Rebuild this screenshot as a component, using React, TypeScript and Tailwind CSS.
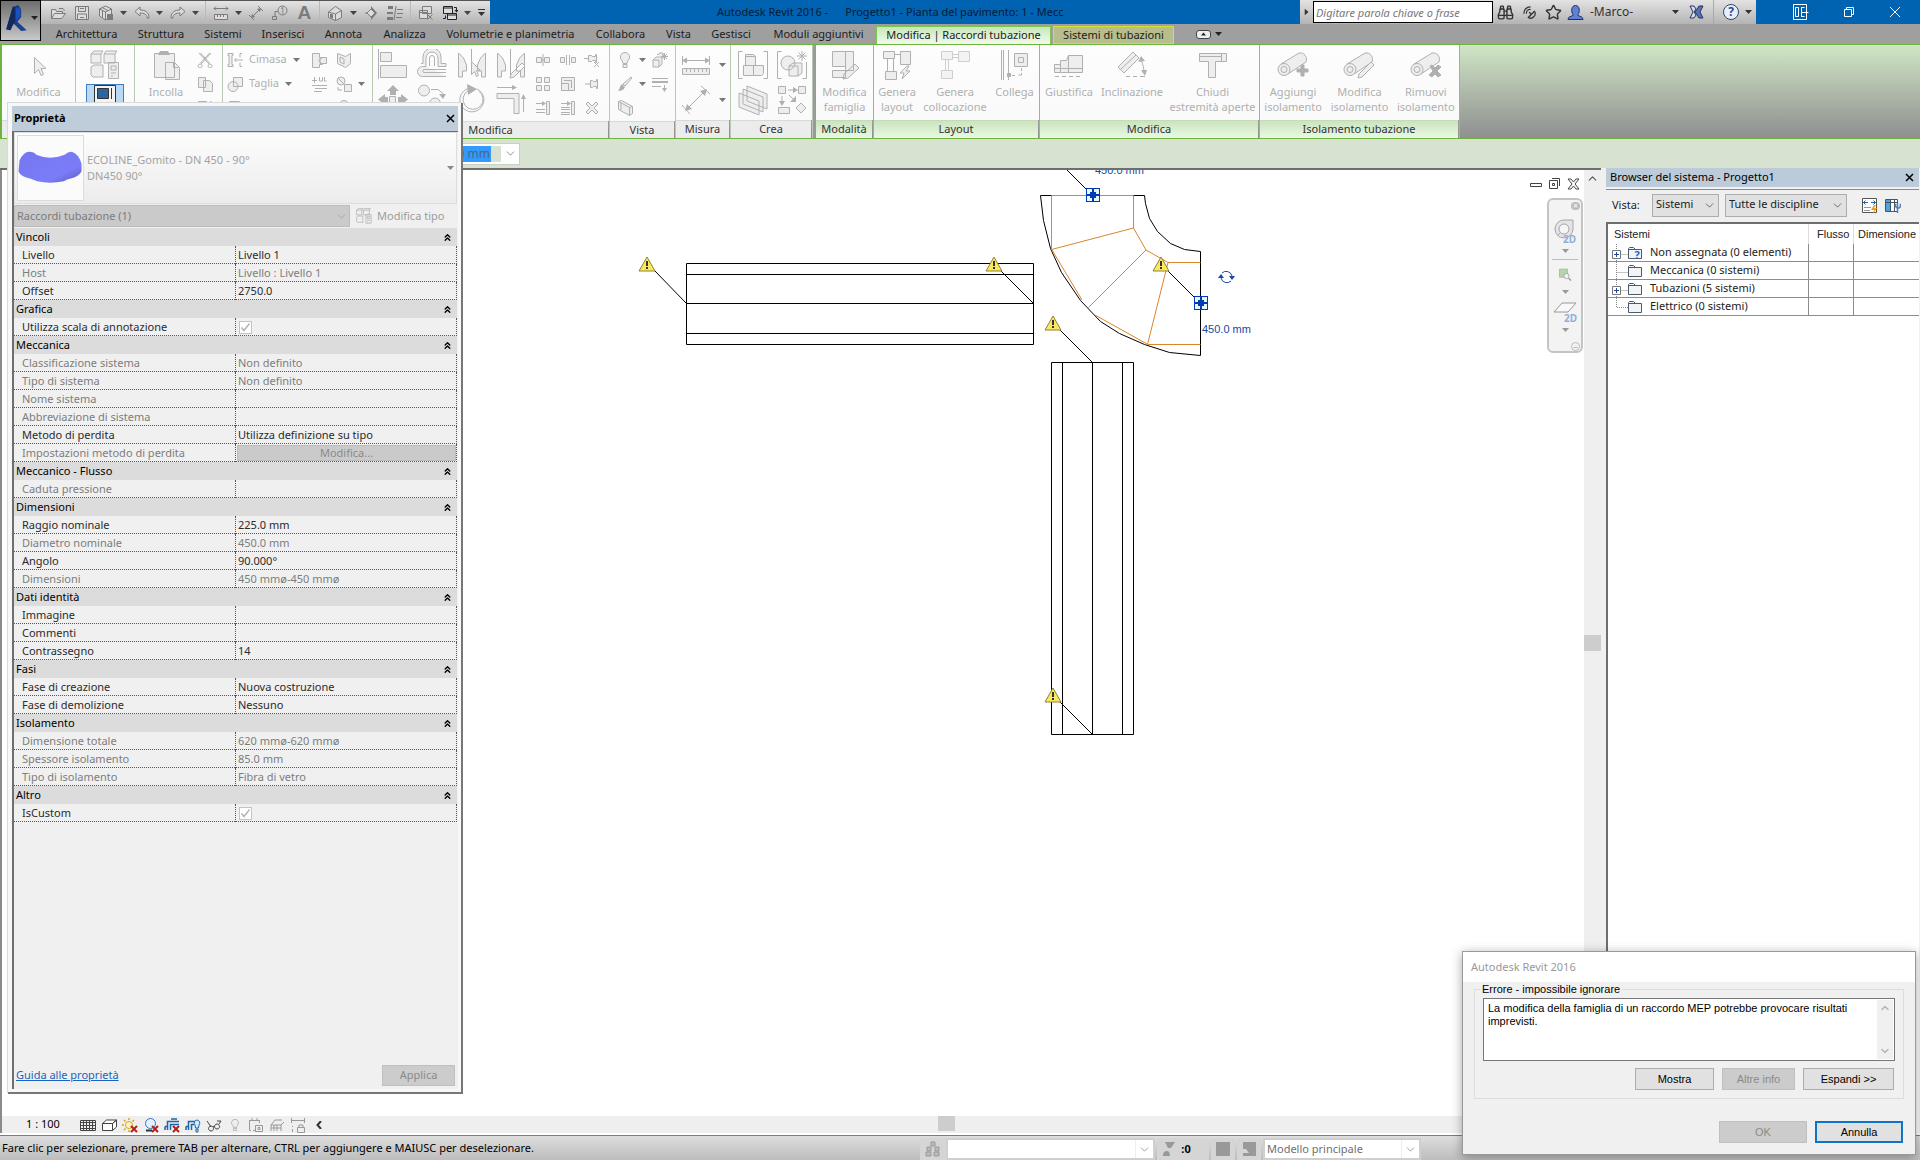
import type { ReactNode } from "react";
import { clsx } from "clsx";
import { Binoculars, ChevronDown, ChevronsUp, ChevronUp, SatelliteDish, Star } from "lucide-react";

type Glyph = {
  size: number;
  box?: string; // outlined with a light fill
  line?: string; // outline only
  solid?: string; // filled
};

const glyphs: Record<string, Glyph> = {
  // quick access
  open: { size: 16, box: "M1.5 13.5V4.5h4l1 2h6v2M1.5 13.5l3-5h11l-4 5z", line: "M9 3.5h4l1.5 2" },
  save: { size: 16, box: "M1.5 1.5h13v13h-13z", line: "M4.5 1.5v5h7v-5M6 3.5h4M3.5 14v-5h9v5M6 12.5h4" },
  sync: { size: 16, box: "M1.5 4l6-3 6 3v7l-6 4-6-4z", line: "M1.5 4l6 3 6-3M7.5 7v8M4 2.5l6 3M4.5 5.5v7", solid: "M9 9h6v6H9z" },
  undo: { size: 16, box: "M1 6.5L6 2v3c5 0 9 2 9 8h-2c0-4-3-5-7-5v3z" },
  redo: { size: 16, box: "M15 6.5L10 2v3c-5 0-9 2-9 8h2c0-4 3-5 7-5v3z" },
  measureSm: { size: 16, box: "M1.5 9.5h13v5h-13z", line: "M1 3.5h14M3 1.5l-2 2 2 2M13 1.5l2 2-2 2M4.5 10v2M7.5 10v2M10.5 10v2" },
  dimSm: { size: 16, line: "M4 12l8-8M1 10l5 5M10 1l5 5", solid: "M3 13l1-4 3 3zM13 3l-1 4-3-3z" },
  house: { size: 16, box: "M1.5 7l7-5.5 6 4v7l-6 3-7-3z", line: "M1.5 7l7 2 6-3.5M8.5 9v6.5", solid: "M3 8.5l3 1v4l-3-1z" },
  section: { size: 16, box: "M4 8l4-4 4 4-4 4z", solid: "M8 1l6 7h-2L8 4zM8 15l6-7h-2l-4 4z", line: "M2 8h2" },
  thin: { size: 16, line: "M10 4.5h6M10 8.5h6M9 12.5h6M9 1l-2 14", solid: "M1 1h5v3H1zM0 7h6v2H0zM0 12h6v3H0z" },
  closeHidden: { size: 16, box: "M4.5 1.5h9v7h-9zM1.5 5.5h8v8h-8z", line: "M1.5 7.5h8M9.5 9.5l5 5M14.5 9.5l-5 5" },
  switchWin: { size: 16, box: "M1.5 1.5h9v7h-9zM5.5 8.5h9v6h-9z", line: "M1.5 3h9M5.5 10h9M12 2.5h2.5v3M3.5 10.5v3H1", solid: "M12.5 5h4l-2 2.5z" },
  // ribbon, large
  cursor: { size: 30, box: "M10.5 7.5v16l4-4 2.5 6 2.5-1-2.5-6h5z" },
  typeProps: { size: 30, box: "M4 1h9l-2 3v9H1V4zM16 1h11l-2 3v9H14V4zM4 15h9v12H3l-2-2v-8zM18.5 12.5h10v16h-10z", line: "M1 4h10M14 4h11M21 16h5v4h-5zM21 23h5M21 26h2" },
  paste: { size: 30, box: "M3.5 3.5h20v24h-20zM14.5 12.5h9l5 5v12h-14z", line: "M22.5 12.5v5h5", solid: "M9 1h8l2 4H7z" },
  align: { size: 30, box: "M2.5 3.5h11v9h-11zM2.5 16.5h26v12h-26z", line: "M.5 0v30" },
  offset: { size: 30, box: "M29 27.5H5.5a5 5 0 0 1 0-10H9V9a6 6 0 0 1 12 0v8.5h8v-3h-5V8a9 9 0 0 0-18 0v6.5H4", line: "M29 23.5H6.5a2 2 0 0 1 0-3H29M12.5 17V9a2.5 2.5 0 0 1 5 0v8" },
  mirror: { size: 30, box: "M1.5 4l5 5 3 7v6h-4v6h-4zM28.5 4l-5 5-3 7v6h4v6h4zM14.5 12.5v13l3-3 2 5 2-1-2-5h4z", line: "M14.5 0v12" },
  mirrorDraw: { size: 30, box: "M1.5 4l5 5 3 7v6h-4v6h-4zM28.5 4l-5 5-3 7v6h4v6h4zM14 29l1-4L26 14l3 3-11 11z", line: "M14.5 0v26" },
  move: { size: 30, box: "M11.5 12.5h6v6h-6z", solid: "M15 1l6 6h-3v4h-6V7H9zM0 15.5L7 10v3h3v5H7v3zM30 15.5L23 10v3h-3v5h3v3zM15 30l6-6h-3v-4h-6v4H9z" },
  copyMove: { size: 30, box: "M7 1a5 5 0 1 1 0 11 5 5 0 1 1 0-11zM18 14a5 5 0 1 1 0 11 5 5 0 1 1 0-11z", line: "M14 5.5h7l5 4v3", solid: "M22 10h7l-3 5z" },
  rotate: { size: 30, line: "M20 5a12 12 0 1 1-9-.5M21.5 7a10 10 0 1 1-10-.5", solid: "M10 0l10 5-9 6z" },
  trim: { size: 30, box: "M1 9.5h22v20h-5v-15H1z", line: "M1 3.5h16M27.5 28V14", solid: "M16 1l5 2.5L16 6zM25 15l2.500-5 2.500 5z" },
  measure: { size: 30, box: "M1.5 18.5h27v6h-27z", line: "M2 10.5h26M1.5 6v9M28.5 6v9M5.5 19v3M9.5 19v3M13.5 19v3M17.5 19v3M21.5 19v3M25.5 19v3", solid: "M1 10.5l5-3v6zM29 10.5l-5-3v6z" },
  dim: { size: 30, line: "M5 25L25 5M1 20l8 9M20 1l9 8", solid: "M4 26l2-7 5 5zM26 4l-2 7-5-5z" },
  group: { size: 30, box: "M7.5 4.5h8l2 2v9h-10zM5.5 15.5h10v10h-10zM15.5 15.5h10v8l-2 2h-8z", line: "M4.5 1.5h-4v27h4M25.500 1.5h4v27h-4M7.5 6.5h10" },
  similar: { size: 30, box: "M11 6a7 7 0 1 1 0 14 7 7 0 1 1 0-14zM12 16l4-3h9v10l-4 3h-9z", line: "M4.5 1.5h-4v27h4M25.5 28.5h4V12M12 16h9v10M25 1v10M20 6h10M21.5 2.5l7 7M28.5 2.5l-7 7" },
  assembly: { size: 30, box: "M9 1l20 8v15l-20-8zM5 4l20 8v15L5 19zM1 8l20 8v14L1 22z" },
  parts: { size: 30, box: "M1.5 1.5h7v7h-7zM21.5 1.5h7v7h-7zM1.5 22.5h11v6h-11zM24 18l5 5-5 5-5-5z", line: "M11 5h6M5 11v6M12 10l5 5", solid: "M16 2l5 3-5 3zM2 16h6l-3 5zM19 17v-6l-6 6z" },
  editFamily: { size: 30, box: "M2.5 1.5h13v15h-13zM15.5 1.5h8v19h-8zM2.5 20.5h13v7h-13zM13 29l1-5 11-10 4 4-11 10z" },
  layout: { size: 30, box: "M1.5 1.5h11v7h-11zM18.5 1.5h10v13h-10zM3.5 21.5h11v8h-11zM25 16l-7 7h4l-2 6 8-8h-4l3-5z", line: "M13 4.5h5M5.5 9v12M11.5 9v12" },
  placing: { size: 30, box: "M1.5 1.5h11v8h-11zM18.5 1.5h11v10h-11zM1.5 20.5h11v8h-11z", line: "M13 4.5h5M13 7.5h5M5.5 10v10M8.5 10v10" },
  connect: { size: 30, box: "M14.5 3.5h13v13h-13zM18.5 7.5h5v5h-5z", line: "M1.5 0v30M3.5 0v30M8.5 0v30M21.5 18v3M21.5 23v2h-3M15 25.5h-3", solid: "M7 23h4v4H7z" },
  justify: { size: 30, box: "M.5 14.5h6v8h-6zM6.5 10.5h6l2-5h14v17h-22z", line: "M1 26.5h4M8 26.5h4M15 26.5h4M22 26.5h4M14.5 5v18M1 18.5h28" },
  slope: { size: 30, box: "M1 17L16 2l6 6L7 23z", line: "M4 19L19 5M9 26.5h4M16 26.5h4M23 26.5h5M24 10c2 4 3 9 3 13", solid: "M21 12l3-6 4 5zM24 20h6l-2 6z" },
  cap: { size: 30, box: "M1.5 3.5h22v8h-6v16h-7v-16h-9zM23.5 3.5h5v8h-5z", line: "M2 6.5h21" },
  // ribbon, small
  cut: { size: 16, line: "M2 1l10 11M14 1L4 12M3.5 1l9 10M12.5 1l-9 10M3 12a2 2 0 1 0 .1 0M13 12a2 2 0 1 0 .1 0" },
  copy: { size: 16, box: "M1.5 1.5h7v10h-7zM6.5 4.5h6l3 3v8h-9z" },
  match: { size: 16, box: "M1.5 1.5h8v12h-8zM14 1l-6 8 2 1z" },
  cope: { size: 16, box: "M1 1.5h5v2H5v9h1v2H1v-2h1v-9H1z", line: "M8 8h8M9.5 6l-2 2 2 2M15 1.5h-2v4M15 14.5h-2v-4" },
  cutGeo: { size: 16, box: "M6.5 1.5h9v9h-9zM6 5.5a5 5 0 1 1 0 10 5 5 0 1 1 0-10z" },
  join: { size: 16, box: "M2.5 1.5h10v9h-10z" },
  face: { size: 16, box: "M1.5 1.5h7v4h3l-4 3 4 4h-3v3h-7zM9 5.5h6.5v6H9z" },
  wall: { size: 16, box: "M1.5 1.5l8 3 5-3v10l-5 4-8-4zM4 5l4 2v5l-4-2z" },
  beam: { size: 16, line: "M3.5 1v6M1 4.5h5M8.5 1v4h3V1M13.5 1v4h2M1 9.5h15M4 12.5h12M3 15.5h8" },
  demolish: { size: 16, box: "M8.5 8.5h7v7h-7zM5 1a4 4 0 1 1 0 8 4 4 0 1 1 0-8z", line: "M2 2l6 6M2 11v3h4" },
  split: { size: 16, box: "M1.5 5.5h5v5h-5zM9.5 5.5h5v5h-5z", line: "M8 2v12M6 8h4" },
  splitGap: { size: 16, box: "M.5 5.5h4v5h-4zM11.5 5.5h4v5h-4z", line: "M6.5 3v10M9.5 3v10" },
  unpin: { size: 16, box: "M4.5 3.5h3l1 1h3v-2h1v8h-1v-2h-3l-1 1h-3z", line: "M0 6.5h4M10 10l5 5M15 10l-5 5" },
  array: { size: 16, box: "M1.5 1.5h5v5h-5zM9.5 1.5h5v5h-5zM1.5 9.5h5v5h-5zM9.5 9.5h5v5h-5z" },
  scale: { size: 16, box: "M1.5 1.5h13v13h-13zM1.5 7.5h7v7h-7z", line: "M4 4.5h7.5V12" },
  pin: { size: 16, box: "M6.5 4.5h2l1 1h3v-2h1v9h-1v-2h-3l-1 1h-2z", line: "M1 8h5" },
  trimOne: { size: 16, box: "M11.5 1.5h3v13h-3z", line: "M1 3.5h7M1 9.5h9M1 12.5h9", solid: "M7 1l4 2.5L7 6z" },
  trimMany: { size: 16, box: "M11.5 1.5h3v13h-3z", line: "M1 3.5h7M1 7.5h9M1 9.5h9M1 12.5h9M1 14.5h9", solid: "M7 1l4 2.5L7 6z" },
  remove: { size: 16, box: "M2 4l2-2 4 4 4-4 2 2-4 4 4 4-2 2-4-4-4 4-2-2 4-4z" },
  bulb: { size: 16, box: "M8 .5a4.5 4.5 0 0 1 3 8l-1 3H6l-1-3a4.5 4.5 0 0 1 3-8zM6 12.5h4v3H6z" },
  cubes: { size: 16, box: "M1 8l3-3h6v7l-3 3H1zM5 3l3-2h3v4", line: "M1 8h6v7M12.5 1v7M9 4.5h7M10 2l5 5M15 2l-5 5" },
  brush: { size: 16, box: "M14 1l1 1-7 8-2-2z", solid: "M5 8l3 3c-1 3-4 4-7 4 2-2 1-4 4-7z" },
  lines: { size: 16, line: "M0 2.5h16M0 5.5h16M0 6.500h16M0 10.5h9M12.5 9v4", solid: "M10 12h5l-2.5 4z" },
  box3d: { size: 16, box: "M1.5 1.5l3-1 11 6v7l-3 2-11-6z", line: "M1.5 1.5l11 6v8M4 3v7M12.5 7.5l3-1" },
  // view bar and status bar
  detail: { size: 16, box: "M.5 3.5h15v10H.5z", line: "M1 5.5h15M1 8.5h15M1 11.5h15M3.5 3v10M6.5 3v10M9.5 3v10M12.5 3v10" },
  style: { size: 16, box: "M1.5 6.5l4-3.5h10l-4 3.5zM1.5 6.5h10v7h-10zM11.5 6.5l4-3.5v7l-4 3.5z" },
  glasses: { size: 16, line: "M1 4l4 6M5 9a2.5 2.5 0 1 0 .1 0M11 7a2.5 2.5 0 1 0 .1 0M7 10l2-1M13 7l2-3h-4" },
  temp: { size: 16, line: "M1 3.5h10M3 13.5H1.5v-10M11.500 3v3M7.5 8.5h7v6h-7zM4 1v2M9 1v2M5 13.5h2M10 10.5h2v2h-2z" },
  analytic: { size: 16, line: "M2 14V8l4-5h7M2 8h10v6M5 8v6M8 8v6M2 11h10M12 8l3-3" },
  lockDim: { size: 16, line: "M1 3.5h14M1.5 1v5M14.5 1v5M2.5 9v1M2.5 12v3M7.5 10.5h7v5h-7zM9 10V8h4v2" },
  worksets: { size: 16, box: "M6 1h4v4H6zM2 6h4v4H2zM10 6h4v4h-4zM1 11h5v4H1zM9 11h5v4H9z" },
  editable: { size: 16, solid: "M4 1h10l-4 6H7zM2 15c0-4 2-5 4-5s3 2 3 5z" },
  design: { size: 16, solid: "M1 1h14v14H1z" },
  addSet: { size: 16, solid: "M2 1h13v14H2v-3h6l-3-4H2z" },
};

function Icon({ name, size, fill = "#eeeeee", className }: { name: string; size?: number; fill?: string; className?: string }) {
  const g = glyphs[name];
  const px = size ?? g.size;
  return (
    <svg width={px} height={px} viewBox={`0 0 ${g.size} ${g.size}`} fill="none" stroke="currentColor" className={clsx("shrink-0", className)} aria-hidden="true">
      {g.box && <path d={g.box} fill={fill} />}
      {g.line && <path d={g.line} />}
      {g.solid && <path d={g.solid} fill="currentColor" stroke="none" />}
    </svg>
  );
}

function Caret({ className }: { className?: string }) {
  return (
    <svg width="7" height="4" viewBox="0 0 7 4" className={clsx("shrink-0", className)} aria-hidden="true">
      <path d="M0 0h7L3.5 4z" fill="currentColor" />
    </svg>
  );
}

function CloseMark() {
  return (
    <svg width="9" height="9" viewBox="0 0 9 9" stroke="#000" strokeWidth="1.5" aria-hidden="true">
      <path d="M1 1l7 7M8 1L1 8" />
    </svg>
  );
}

/* ---------- title bar ---------- */

function Quick({ name, className }: { name: string; className?: string }) {
  return (
    <button aria-label={name} className={clsx("flex w-6 items-center justify-center", className)}>
      <Icon name={name} fill="#dcdcdc" />
    </button>
  );
}

const QuickCaret = () => (
  <button aria-label="menu" className="flex w-3 items-center justify-center text-[#444]">
    <Caret />
  </button>
);

const QuickSep = () => <span className="mx-[3px] h-full w-px bg-[#b9b9b9]" />;

function QuickAccess() {
  return (
    <div className="flex h-full w-[449px] shrink-0 border-t border-[#555] bg-linear-to-b from-[#e3e3e3] to-[#b4b4b4] pl-[5px] text-[#7b7b7b]">
      <Quick name="open" />
      <Quick name="save" />
      <Quick name="sync" />
      <QuickCaret />
      <Quick name="undo" />
      <QuickCaret />
      <Quick name="redo" />
      <QuickCaret />
      <QuickSep />
      <Quick name="measureSm" />
      <QuickCaret />
      <Quick name="dimSm" />
      <button aria-label="tag" className="flex w-6 items-center justify-center">
        <svg width="16" height="16" viewBox="0 0 16 16" fill="none" stroke="currentColor">
          <circle cx="10.5" cy="5.5" r="4.5" />
          <path d="M6 6.5H3V12M.5 11.5h4v3h-4z" />
          <text x="10.5" y="8.5" fontSize="8" textAnchor="middle" fill="currentColor" stroke="none" fontFamily="Noto Sans, sans-serif">1</text>
        </svg>
      </button>
      <button className="w-6 text-center font-['Liberation_Sans',sans-serif] text-[19px] leading-6 font-bold">A</button>
      <QuickSep />
      <Quick name="house" />
      <QuickCaret />
      <Quick name="section" />
      <Quick name="thin" />
      <QuickSep />
      <Quick name="closeHidden" />
      <Quick name="switchWin" className="text-[#222]" />
      <QuickCaret />
      <button aria-label="customize" className="flex w-4 flex-col items-center justify-center gap-0.5 text-[#333]">
        <span className="h-px w-[7px] bg-[#333]" />
        <Caret />
      </button>
    </div>
  );
}

function InfoCenter() {
  return (
    <div className="flex h-full w-[456px] shrink-0 items-center bg-linear-to-b from-[#e3e3e3] to-[#b4b4b4] text-[#333]">
      <button aria-label="expand" className="flex w-[13px] justify-center">
        <Caret className="-rotate-90" />
      </button>
      <input
        aria-label="Cerca"
        placeholder="Digitare parola chiave o frase"
        className="h-[22px] w-[180px] border border-black bg-white px-[2px] text-[11px] italic outline-none placeholder:text-[#777]"
      />
      <button aria-label="search" className="flex w-6 justify-center"><Binoculars size={17} strokeWidth={2} /></button>
      <button aria-label="subscription" className="flex w-6 justify-center"><SatelliteDish size={15} strokeWidth={2} className="-scale-x-100" /></button>
      <button aria-label="favorites" className="flex w-6 justify-center"><Star size={17} strokeWidth={2} /></button>
      <button className="flex items-center gap-[6px] pl-[2px]">
        <svg width="17" height="17" viewBox="0 0 17 17" fill="#5f82d8" stroke="#1d2f66">
          <path d="M1 15.5c0-3 3-3 5-4v-1C4 8 4 1.5 8.5 1.5S13 8 11 10.5v1c2 1 5 1 5 4z" />
        </svg>
        <span className="w-[76px] text-left text-[12px]">-Marco-</span>
        <Caret />
      </button>
      <button aria-label="exchange" className="ml-[10px] flex">
        <svg width="15" height="14" viewBox="0 0 15 14" fill="#5472b8" stroke="#28355e">
          <path d="M1 1h4l2 3-2 3 2 3-2 3H1l3-6z" fill="#d5dbee" />
          <path d="M14 1h-4L6 7l4 6h4l-3-6z" />
        </svg>
      </button>
      <span className="mx-[9px] h-full w-px bg-[#aaa]" />
      <button className="flex size-4 items-center justify-center rounded-full border border-[#34466f] bg-[#e9eefb] text-[12px] leading-none font-bold text-[#274a9c]">?</button>
      <Caret className="ml-[6px]" />
    </div>
  );
}

function TitleBar() {
  return (
    <div className="flex h-6 bg-[#0063b1]">
      <QuickAccess />
      <p className="min-w-0 flex-1 truncate pl-[227px] text-[11px] leading-6 whitespace-pre text-[#041c38]">
        {"Autodesk Revit 2016 -      Progetto1 - Pianta del pavimento: 1 - Mecc"}
      </p>
      <InfoCenter />
      <div className="flex w-[164px] shrink-0 items-center pl-[37px] text-white">
        <button aria-label="panels">
          <svg width="16" height="16" viewBox="0 0 16 16" fill="none" stroke="currentColor">
            <path d="M.5.5h13v15H.5zM2.5 3.5h3v9h-3zM8.5 3v10M8.5 3.5h3M8.5 8.5h7M8.5 12.5h3" />
          </svg>
        </button>
        <button aria-label="restore" className="ml-[34px]">
          <svg width="12" height="12" viewBox="0 0 12 12" fill="none" stroke="currentColor">
            <path d="M1.5 3.5h7v7h-7zM3.5 3V1.5h7v7H9" />
          </svg>
        </button>
        <button aria-label="close" className="ml-[34px]">
          <svg width="12" height="12" viewBox="0 0 12 12" stroke="currentColor">
            <path d="M1 1l10 10M11 1L1 11" />
          </svg>
        </button>
      </div>
    </div>
  );
}

/* ---------- ribbon ---------- */

const tabs = [
  { label: "Architettura", width: "w-[83px]" },
  { label: "Struttura", width: "w-[66px]" },
  { label: "Sistemi", width: "w-[58px]" },
  { label: "Inserisci", width: "w-[62px]" },
  { label: "Annota", width: "w-[59px]" },
  { label: "Analizza", width: "w-[63px]" },
  { label: "Volumetrie e planimetria", width: "w-[149px]" },
  { label: "Collabora", width: "w-[71px]" },
  { label: "Vista", width: "w-[45px]" },
  { label: "Gestisci", width: "w-[60px]" },
  { label: "Moduli aggiuntivi", width: "w-[115px]" },
];

function Tabs() {
  return (
    <nav className="flex h-5 bg-[#9f9f9f] pl-1 text-[11px] text-[#1c1c1c]">
      {tabs.map((t) => (
        <button key={t.label} className={clsx("shrink-0 pt-px whitespace-nowrap", t.width)}>
          {t.label}
        </button>
      ))}
      <button className="mt-[2px] w-[175px] shrink-0 border border-b-0 border-[#7ac750] bg-linear-to-b from-[#c9e6bb] to-[#f1fbec] whitespace-nowrap">
        Modifica | Raccordi tubazione
      </button>
      <button className="mt-[2px] ml-[2px] w-[121px] shrink-0 border border-[#d5de3f] bg-[#b7bd8b] whitespace-nowrap">
        Sistemi di tubazioni
      </button>
      <button aria-label="minimize ribbon" className="ml-[22px] flex items-center gap-1 text-[#222]">
        <span className="flex h-[9px] w-[15px] items-center justify-center rounded-[3px] border border-[#444] bg-[#eee]">
          <Caret className="w-[5px] rotate-180" />
        </span>
        <Caret />
      </button>
    </nav>
  );
}

function Panel({ title, width, green, children }: { title?: string; width: string; green?: boolean; children: ReactNode }) {
  return (
    <section className={clsx("flex h-full shrink-0 flex-col border-r", width, green ? "border-[#9cb691]" : "border-[#b9c9b2]")}>
      <div className="flex flex-1 bg-linear-to-b from-[#fdfdfd] to-[#fafafa] pt-1">{children}</div>
      <h2
        className={clsx(
          "mr-px h-[18px] border-t text-center text-[11px] leading-[15px] text-[#333]",
          green ? "border-[#c3dcb6] bg-linear-to-b from-[#cbe4bf] to-[#e9f9e1]" : "border-[#d8d8d8] bg-[#ececec]",
        )}
      >
        {title}
      </h2>
    </section>
  );
}

function Big({ name, lines, width = "flex-1", faint, children }: { name?: string; lines: string[]; width?: string; faint?: boolean; children?: ReactNode }) {
  return (
    <button disabled className={clsx("flex flex-col items-center gap-1 text-[11px] leading-[15px]", width)}>
      {name ? <Icon name={name} className={clsx("mt-px", faint && "opacity-60")} /> : children}
      <span className="whitespace-nowrap">
        {lines.map((l) => (
          <span key={l} className="block">{l}</span>
        ))}
      </span>
    </button>
  );
}

function Small({ name, caret, label, className }: { name: string; caret?: boolean; label?: string; className?: string }) {
  return (
    <button disabled aria-label={label ?? name} className={clsx("flex h-6 items-center gap-[6px] pb-[3px] text-[11px] whitespace-nowrap", className)}>
      <Icon name={name} />
      {label}
      {caret && <Caret className="text-[#777]" />}
    </button>
  );
}

// insulated pipe with a modifier mark at its lower right
function InsulationIcon({ mark }: { mark: "add" | "edit" | "remove" }) {
  const marks = {
    add: "M24 15h3v4h4v3h-4v4h-3v-4h-4v-3h4z",
    edit: "M15 28l1-4 12-12 3 3-12 12z",
    remove: "M20 16l2-1 3 3 3-3 3 2-4 4 4 4-3 2-3-3-3 3-3-2 4-4z",
  };
  return (
    <svg width="32" height="30" viewBox="0 0 32 30" fill="#eee" stroke="currentColor" className="mt-px" aria-hidden="true">
      <path d="M4 14L22 3c5-1 9 4 7 9L11 24z" />
      <circle cx="7" cy="19.5" r="6" />
      <circle cx="7" cy="19.5" r="3" fill="none" />
      <path d={marks[mark]} fill={mark === "edit" ? "#eee" : "currentColor"} />
    </svg>
  );
}

function Ribbon() {
  return (
    <div className="flex h-[95px] border-t border-b border-l-2 border-[#6cb43e] bg-linear-to-b from-[#d0e6c6] to-[#8f8f8f] text-[#b0b0b0]">
      <Panel width="w-[74px]">
        <Big name="cursor" lines={["Modifica"]} />
      </Panel>
      <Panel width="w-[59px]">
        <div className="flex flex-1 flex-col items-center gap-[4px] pt-px">
          <Icon name="typeProps" />
          <button aria-label="Proprietà" className="flex h-[36px] w-[38px] justify-center border border-[#3d7fc0] bg-[#b9d9f6]">
            <svg width="22" height="30" viewBox="0 0 22 30" stroke="#333">
              <path d="M.5.5h21v29H.5z" fill="#f3f3f3" />
              <path d="M3.5 3.5h11v10h-11z" fill="#2b659e" />
              <path d="M17.5 3v11M5 17v2" />
            </svg>
          </button>
        </div>
      </Panel>
      <Panel width="w-[88px]">
        <Big name="paste" lines={["Incolla"]} width="w-[62px]" />
        <div className="flex flex-col">
          <Small name="cut" />
          <Small name="copy" />
          <Small name="match" />
        </div>
      </Panel>
      <Panel width="w-[150px]">
        <div className="flex w-[88px] flex-col pl-1">
          <Small name="cope" label="Cimasa" caret />
          <Small name="cutGeo" label="Taglia" caret />
          <Small name="join" label="Unisci" caret />
        </div>
        <div className="flex w-[25px] flex-col">
          <Small name="face" />
          <Small name="beam" />
          <Small name="split" />
        </div>
        <div className="flex flex-col">
          <Small name="wall" />
          <Small name="demolish" caret />
          <Small name="bulb" />
        </div>
      </Panel>
      <Panel width="w-[237px]" title="Modifica">
        <div className="grid w-[162px] grid-cols-4 content-start gap-y-[5px] pl-[5px]">
          {["align", "offset", "mirror", "mirrorDraw", "move", "copyMove", "rotate", "trim"].map((n) => (
            <button key={n} disabled aria-label={n}>
              <Icon name={n} />
            </button>
          ))}
        </div>
        <div className="grid flex-1 grid-cols-3 content-start">
          {["split", "splitGap", "unpin", "array", "scale", "pin", "trimOne", "trimMany", "remove"].map((n) => (
            <Small key={n} name={n} />
          ))}
        </div>
      </Panel>
      <Panel width="w-[66px]" title="Vista">
        <div className="flex w-[42px] flex-col pl-[7px]">
          <Small name="bulb" caret />
          <Small name="brush" caret />
          <Small name="box3d" />
        </div>
        <div className="flex flex-col">
          <Small name="cubes" />
          <Small name="lines" />
        </div>
      </Panel>
      <Panel width="w-[55px]" title="Misura">
        <div className="flex flex-col gap-[5px] pt-px pl-[5px]">
          {["measure", "dim"].map((n) => (
            <button key={n} disabled aria-label={n} className="flex items-center gap-[8px]">
              <Icon name={n} />
              <Caret className="text-[#777]" />
            </button>
          ))}
        </div>
      </Panel>
      <Panel width="w-[82px]" title="Crea">
        <div className="grid flex-1 grid-cols-2 content-start justify-items-center gap-y-[5px] pt-px pl-[2px]">
          {["group", "similar", "assembly", "parts"].map((n) => (
            <button key={n} disabled aria-label={n}>
              <Icon name={n} />
            </button>
          ))}
        </div>
      </Panel>
      <span className="h-full w-[3px] shrink-0 bg-[#9a9a9a]" />
      <Panel width="w-[58px]" title="Modalità" green>
        <Big name="editFamily" lines={["Modifica", "famiglia"]} />
      </Panel>
      <Panel width="w-[166px]" title="Layout" green>
        <Big name="layout" lines={["Genera", "layout"]} width="w-[46px]" />
        <Big name="placing" lines={["Genera", "collocazione"]} width="w-[70px]" faint />
        <Big name="connect" lines={["Collega"]} />
      </Panel>
      <Panel width="w-[220px]" title="Modifica" green>
        <Big name="justify" lines={["Giustifica"]} width="w-[58px]" />
        <Big name="slope" lines={["Inclinazione"]} width="w-[68px]" />
        <Big name="cap" lines={["Chiudi", "estremità aperte"]} />
      </Panel>
      <Panel width="w-[200px]" title="Isolamento tubazione" green>
        <Big lines={["Aggiungi", "isolamento"]}><InsulationIcon mark="add" /></Big>
        <Big lines={["Modifica", "isolamento"]}><InsulationIcon mark="edit" /></Big>
        <Big lines={["Rimuovi", "isolamento"]}><InsulationIcon mark="remove" /></Big>
      </Panel>
    </div>
  );
}

function OptionsBar() {
  return (
    <div className="flex h-[31px] items-center border-b-2 border-[#6e6e6e] bg-[#d8e2d0] pl-[400px]">
      <div className="flex h-[22px] w-[120px] items-center border border-[#c9d0c4] bg-white pl-[2px]">
        <div className="flex w-[98px] bg-[#d8e2d0]">
          <input aria-label="Diametro" defaultValue="450.0 mm" className="h-4 w-[88px] bg-[#3399ff] pr-px text-right text-[12px] text-[#4d6680] outline-none" />
        </div>
        <ChevronDown size={13} strokeWidth={1.5} className="ml-[3px] text-[#777]" />
      </div>
    </div>
  );
}

/* ---------- drawing area ---------- */

function Warning({ x, y }: { x: number; y: number }) {
  return (
    <g>
      <path d={`M${x} ${y - 7}l8 14h-16z`} fill="#fbe95b" stroke="#8c8240" strokeLinejoin="round" />
      <path d={`M${x} ${y - 3}v5M${x} ${y + 3}v2`} stroke="#333" strokeWidth="2" />
    </g>
  );
}

function Grip({ x, y }: { x: number; y: number }) {
  return (
    <g stroke="#003bb5">
      <rect x={x - 6.5} y={y - 6.5} width="13" height="13" fill="#e6f7ff" />
      <path d={`M${x} ${y - 6}v12M${x - 6} ${y}h12`} strokeWidth="2" />
      <rect x={x - 3} y={y - 3} width="6" height="6" fill="#003bb5" stroke="none" />
    </g>
  );
}

function PlanDrawing() {
  return (
    <svg width="1280" height="600" viewBox="2 170 1280 600" fill="none" stroke="#000" className="block" role="img" aria-label="Pianta">
      {/* horizontal pipe */}
      <path d="M686.5 263.5h347v81h-347zM686.5 274.5h347M686.5 303.5h347M686.5 333.5h347" />
      {/* vertical pipe */}
      <path d="M1051.5 362.5h82v372h-82zM1062.5 362.5v372M1092.5 362.5v372M1122.5 362.5v372" />
      {/* elbow */}
      <path d="M1040.5 195.5h104l1 8 4 15 8 13 13 12 14 6 16 2v104l-31-3-25-8-25-11-19-12-20-21-19-28-11-24-7-28z" />
      <path
        d="M1051.5 249.5v-54h82v32.5L1146 250l22 12.5h32.5M1051.5 249.5l82-21.5M1146 250l-57.5 57.5M1168 262.5l-20.5 82h53M1052 250l30 50M1095 315l52 29"
        stroke="#dc862b"
      />
      {/* leaders */}
      <path d="M654 270l32 33M1001 271l32 32M1060 330l32 32M1168 271l28 28M1060 702l32 32M1067 170l21 21" />
      <Warning x={647} y={264} />
      <Warning x={994} y={264} />
      <Warning x={1053} y={323} />
      <Warning x={1161} y={264} />
      <Warning x={1053} y={695} />
      <Grip x={1093} y={195} />
      <Grip x={1201} y={303} />
      <g stroke="#1947a8">
        <path d="M1222 273a6 6 0 0 1 10 3M1231 281a6 6 0 0 1-10-3" />
        <path d="M1229 276h6l-3 4zM1218 278h6l-3-4z" fill="#1947a8" stroke="none" />
      </g>
      <g fill="#1b47a0" stroke="none" fontSize="11" fontFamily="'Liberation Sans', sans-serif">
        <text x="1095" y="174">450.0 mm</text>
        <text x="1202" y="333">450.0 mm</text>
      </g>
    </svg>
  );
}

function NavigationBar() {
  return (
    <div className="flex h-[155px] w-9 flex-col items-center rounded-md border-2 border-[#c4c4c4] bg-[#f3f3f3] text-[#999]">
      <button aria-label="close" className="mt-[2px] mr-[1px] flex size-[9px] items-center justify-center self-end rounded-full bg-[#bdbdbd] text-[8px] leading-none text-white">×</button>
      <button className="mt-[9px] flex flex-col items-end text-[10px] leading-[8px] font-bold text-[#8fb0d8]">
        <svg width="22" height="20" viewBox="0 0 22 20" fill="#e4e4e8" stroke="#a5a5a5">
          <path d="M10 1h9v9a9 9 0 1 1-9-9z" />
          <circle cx="10" cy="10" r="5" fill="#f5f5f5" />
          <path d="M6 14l-2 2" />
        </svg>
        <span className="-mt-[4px]">2D</span>
      </button>
      <Caret className="mt-[6px]" />
      <span className="mt-[6px] h-px w-[26px] bg-[#bbb]" />
      <svg width="18" height="18" viewBox="0 0 18 18" fill="#b5d4aa" stroke="#9ab890" className="mt-[8px]">
        <path d="M1.5 1.5h11v11h-11z" />
        <circle cx="11" cy="11" r="3.5" fill="#f2f2f2" stroke="#999" />
        <path d="M14 14l3 3" stroke="#999" strokeWidth="2" />
      </svg>
      <Caret className="mt-[9px]" />
      <button className="mt-[8px] flex flex-col items-end text-[10px] leading-[8px] font-bold text-[#8fb0d8]">
        <svg width="24" height="11" viewBox="0 0 24 11" fill="#f8f8f8" stroke="#999">
          <path d="M9 1h14l-8 9H1z" />
        </svg>
        <span className="mt-px">2D</span>
      </button>
      <Caret className="mt-[6px]" />
      <span className="mt-[10px] mr-[1px] flex size-[9px] items-center justify-center self-end rounded-full border border-[#bbb] text-[8px] leading-none">−</span>
    </div>
  );
}

function XMark() {
  return <path d="M9 9l6 6M15 9l-6 6" stroke="#b3201c" strokeWidth="2" />;
}

function ViewControlBar() {
  const cell = "flex w-[21px] justify-center";
  return (
    <div className="flex h-[17px] items-center bg-[#efefef] text-[#444]">
      <span className="w-[75px] pl-[24px] text-[11px] text-black">1 : 100</span>
      <button aria-label="detail level" className={cell}><Icon name="detail" /></button>
      <button aria-label="visual style" className={cell}><Icon name="style" fill="#fff" /></button>
      <button aria-label="sun path" className={cell}>
        <svg width="16" height="16" viewBox="0 0 16 16" fill="none">
          <circle cx="7" cy="8" r="3.5" fill="#fff3c4" stroke="#d9a520" />
          <path d="M7 1v2M7 13v2M0 8h2M2 3l1.5 1.5M12 3l-1.5 1.5M2 13l1.5-1.5" stroke="#d9a520" strokeWidth="1.5" />
          <XMark />
        </svg>
      </button>
      <button aria-label="shadows" className={cell}>
        <svg width="16" height="16" viewBox="0 0 16 16" fill="none">
          <circle cx="7.5" cy="6.5" r="5" fill="#e3f1fd" stroke="#2e78bd" />
          <path d="M3 13.5h6" stroke="#333" strokeWidth="2" />
          <XMark />
        </svg>
      </button>
      <button aria-label="crop view" className={cell}>
        <svg width="16" height="16" viewBox="0 0 16 16" fill="none" stroke="#1b66a8">
          <path d="M1 13V9.5M3.5 13V4.5H15M6.5 13V7.5H15M1 9.5h2M7 2h6" strokeWidth="1.5" />
          <XMark />
        </svg>
      </button>
      <button aria-label="show crop region" className={cell}>
        <svg width="16" height="16" viewBox="0 0 16 16" fill="none" stroke="#1b66a8">
          <path d="M1 13V9.5M3.5 13V4.5H10M6.5 13V7.5H9M1 9.5h2" strokeWidth="1.5" />
          <path d="M12 3a3 3 0 0 1 2 5l-.5 3h-3L10 8a3 3 0 0 1 2-5zM11 12h2v3h-2z" fill="#d6ebfb" />
        </svg>
      </button>
      <button aria-label="hide" className={cell}><Icon name="glasses" /></button>
      <button aria-label="reveal" className={clsx(cell, "text-[#aaa]")}><Icon name="bulb" size={12} /></button>
      <button aria-label="temporary view" className={clsx(cell, "text-[#999]")}><Icon name="temp" /></button>
      <button aria-label="analytical model" className={clsx(cell, "text-[#999]")}><Icon name="analytic" /></button>
      <button aria-label="constraints" className={clsx(cell, "text-[#999]")}><Icon name="lockDim" /></button>
      <button aria-label="collapse" className={cell}>
        <svg width="6" height="8" viewBox="0 0 6 8" fill="none" stroke="#333" strokeWidth="2">
          <path d="M5 0L1.5 4 5 8" />
        </svg>
      </button>
      <div className="flex h-[15px] flex-1 self-start pl-[609px]">
        <span className="h-full w-[17px] bg-[#cdcdcd]" />
      </div>
    </div>
  );
}

function DrawingArea() {
  return (
    <main className="flex min-w-0 flex-1 flex-col border-l-2 border-[#8a8a8a] bg-white">
      <div className="flex min-h-0 flex-1">
        <div className="relative min-w-0 flex-1 overflow-hidden">
          <PlanDrawing />
          <div className="absolute top-[7px] right-[1px] flex flex-col items-end gap-[8px]">
            <svg width="50" height="13" viewBox="0 0 50 13" fill="none" stroke="#444" className="mr-[3px]" aria-hidden="true">
              <path d="M.5 6.5h11v3H.5zM19.5 3.5h8v8h-8zM22 1.5h7.5V9M22.5 6.5h2v2h-2z" />
              <path d="M38 2h3l2.5 3L46 2h3l-4 5 4 5h-3l-2.5-3L41 12h-3l4-5z" />
            </svg>
            <NavigationBar />
          </div>
        </div>
        <div className="flex w-[17px] flex-col items-center bg-[#efefef]">
          <ChevronUp size={13} strokeWidth={2} className="mt-[2px] text-[#555]" />
          <span className="mt-[450px] h-4 w-full shrink-0 bg-[#cdcdcd]" />
        </div>
      </div>
      <ViewControlBar />
    </main>
  );
}

/* ---------- system browser ---------- */

const systems = [
  { label: "Non assegnata (0 elementi)", expandable: true, unknown: true },
  { label: "Meccanica (0 sistemi)" },
  { label: "Tubazioni (5 sistemi)", expandable: true },
  { label: "Elettrico (0 sistemi)" },
];

function TreeMark({ expandable, unknown, last }: { expandable?: boolean; unknown?: boolean; last?: boolean }) {
  return (
    <svg width="40" height="17" viewBox="0 0 40 17" fill="none" className="shrink-0" aria-hidden="true">
      <path d={last ? "M8.5 0v9.5H20" : "M8.5 0v17M8.5 10.5H20"} stroke="#888" strokeDasharray="1 1" />
      {expandable && <path d="M4.5 6.5h8v8h-8z" fill="#fff" stroke="#777" />}
      {expandable && <path d="M6 10.5h5M8.5 8v5" stroke="#234a94" />}
      <path d="M20.5 14.5v-10l1-1h4l2 2h6v9z" fill="#f2f4f8" stroke="#4d5a6b" />
      <path d="M21 5.5h7" stroke="#4d5a6b" />
      {unknown && <text x="29" y="15" textAnchor="middle" fontSize="11" fontWeight="700" fontFamily="Noto Sans, sans-serif" fill="#1d63c4">?</text>}
    </svg>
  );
}

function Dropdown({ id, label, value, width }: { id: string; label: string; value: string; width: string }) {
  return (
    <div className={clsx("relative flex h-[23px] shrink-0 border border-[#adadad] bg-[#e1e1e1]", width)}>
      <select id={id} aria-label={label} className="w-full appearance-none pb-[2px] pl-[3px] text-[11px] outline-none">
        <option>{value}</option>
      </select>
      <ChevronDown size={13} strokeWidth={1.5} className="pointer-events-none absolute top-[4px] right-[2px] text-[#555]" />
    </div>
  );
}

function SystemBrowser() {
  return (
    <aside className="-mt-[2px] flex w-[319px] shrink-0 flex-col bg-[#f0f0f0] pr-px pl-[5px]">
      <header className="flex h-[19px] items-center justify-between bg-[#bccbd9] pr-[5px] pl-1 text-[11px] text-black">
        <h2>Browser del sistema - Progetto1</h2>
        <button aria-label="close"><CloseMark /></button>
      </header>
      <div className="mt-[2px] flex h-[33px] items-center border-t border-[#8c8c8c] pb-px pl-[6px]">
        <label htmlFor="vista" className="w-[40px] text-[11px]">Vista:</label>
        <Dropdown id="vista" label="Vista" value="Sistemi" width="w-[67px]" />
        <span className="w-[6px]" />
        <Dropdown id="discipline" label="Discipline" value="Tutte le discipline" width="w-[122px]" />
        <button aria-label="autofit" className="ml-[15px]">
          <svg width="16" height="16" viewBox="0 0 16 16" fill="none">
            <path d="M.5.5h14v14H.5z" fill="#fff" stroke="#555" />
            <path d="M1 4.5h5M9 4.5h5M3.5 2.5l-2 2 2 2M11.5 2.5l2 2-2 2" stroke="#1a62b5" />
            <path d="M2 9.5h7M2 12.500h6" stroke="#999" />
            <path d="M12 7l-3 5h3l-1 4 4-6h-3l2-3z" fill="#f0a125" />
          </svg>
        </button>
        <button aria-label="columns" className="ml-[7px]">
          <svg width="16" height="16" viewBox="0 0 16 16" fill="none">
            <path d="M.5 1.5h12v12H.5z" fill="#fff" stroke="#456" />
            <path d="M1 2h4v11H1z" fill="#4fa3dc" />
            <path d="M1 4.5h11M5.5 2v11M9.5 2v11" stroke="#456" />
            <path d="M12.5 5v10M15 6a2.5 2.5 0 1 1-4 0" stroke="#5a7fae" strokeWidth="1.5" />
          </svg>
        </button>
      </div>
      <div className="flex-1 border-t-2 border-l-2 border-[#6e6e6e] bg-white">
        <table className="w-full table-fixed border-separate border-spacing-0 text-[11px]">
          <colgroup>
            <col />
            <col className="w-[45px]" />
            <col className="w-[66px]" />
          </colgroup>
          <thead>
            <tr className="h-5 text-left font-['Liberation_Sans',sans-serif]">
              <th className="p-0 pl-[6px] font-normal">Sistemi</th>
              <th className="border-l border-[#ddd] p-0 pl-[8px] font-normal">Flusso</th>
              <th className="border-l border-[#ddd] p-0 pl-1 font-normal">Dimensione</th>
            </tr>
          </thead>
          <tbody>
            {systems.map((s, i) => (
              <tr key={s.label} className="h-[18px]">
                <td className="border-b border-[#8c8c8c] p-0">
                  <div className="flex h-[17px] items-center whitespace-nowrap">
                    <TreeMark expandable={s.expandable} unknown={s.unknown} last={i === systems.length - 1} />
                    <span className="pl-[2px]">{s.label}</span>
                  </div>
                </td>
                <td className="border-b border-l border-[#8c8c8c] p-0" />
                <td className="border-b border-l border-[#8c8c8c] p-0" />
              </tr>
            ))}
          </tbody>
        </table>
      </div>
    </aside>
  );
}

/* ---------- properties palette ---------- */

type Property = { label: string; value?: string; off?: boolean; kind?: "check" | "button" };

const groups: { name: string; items: Property[] }[] = [
  {
    name: "Vincoli",
    items: [
      { label: "Livello", value: "Livello 1" },
      { label: "Host", value: "Livello : Livello 1", off: true },
      { label: "Offset", value: "2750.0" },
    ],
  },
  { name: "Grafica", items: [{ label: "Utilizza scala di annotazione", kind: "check" }] },
  {
    name: "Meccanica",
    items: [
      { label: "Classificazione sistema", value: "Non definito", off: true },
      { label: "Tipo di sistema", value: "Non definito", off: true },
      { label: "Nome sistema", off: true },
      { label: "Abbreviazione di sistema", off: true },
      { label: "Metodo di perdita", value: "Utilizza definizione su tipo" },
      { label: "Impostazioni metodo di perdita", value: "Modifica...", off: true, kind: "button" },
    ],
  },
  { name: "Meccanico - Flusso", items: [{ label: "Caduta pressione", off: true }] },
  {
    name: "Dimensioni",
    items: [
      { label: "Raggio nominale", value: "225.0 mm" },
      { label: "Diametro nominale", value: "450.0 mm", off: true },
      { label: "Angolo", value: "90.000°" },
      { label: "Dimensioni", value: "450 mmø-450 mmø", off: true },
    ],
  },
  { name: "Dati identità", items: [{ label: "Immagine" }, { label: "Commenti" }, { label: "Contrassegno", value: "14" }] },
  {
    name: "Fasi",
    items: [
      { label: "Fase di creazione", value: "Nuova costruzione" },
      { label: "Fase di demolizione", value: "Nessuno" },
    ],
  },
  {
    name: "Isolamento",
    items: [
      { label: "Dimensione totale", value: "620 mmø-620 mmø", off: true },
      { label: "Spessore isolamento", value: "85.0 mm", off: true },
      { label: "Tipo di isolamento", value: "Fibra di vetro", off: true },
    ],
  },
  { name: "Altro", items: [{ label: "IsCustom", kind: "check" }] },
];

function PropertyValue({ item }: { item: Property }) {
  if (item.kind === "check") {
    return (
      <span className="relative mt-[2px] ml-px block size-[13px]">
        <input type="checkbox" defaultChecked disabled aria-label={item.label} className="block size-[13px] appearance-none border border-[#c3c3c3] bg-white" />
        <svg width="13" height="13" viewBox="0 0 13 13" fill="none" stroke="#b5b5b5" strokeWidth="1.5" className="pointer-events-none absolute inset-0">
          <path d="M2.5 6.5L5 9.5l5.500-7" />
        </svg>
      </span>
    );
  }
  if (item.kind === "button") {
    return (
      <button disabled className="mt-px block h-4 w-full border border-[#bcbcbc] bg-[#cacaca] leading-[14px] text-[#8a8a8a]">
        {item.value}
      </button>
    );
  }
  return <>{item.value}</>;
}

function PropertyTable() {
  return (
    <table className="w-full table-fixed border-separate border-spacing-0 text-[11px] leading-[16px]">
      <colgroup>
        <col className="w-[221px]" />
        <col />
      </colgroup>
      {groups.map((g) => (
        <tbody key={g.name}>
          <tr className="h-[18px] bg-[#dcdcdc] text-black">
            <th colSpan={2} className="p-0 text-left font-normal">
              <button className="flex w-full items-center justify-between pr-[4px] pl-[2px]">
                {g.name}
                <ChevronsUp size={11} strokeWidth={3} />
              </button>
            </th>
          </tr>
          {g.items.map((p) => (
            <tr key={p.label} className={clsx("h-[18px]", p.off ? "text-[#7d7d7d]" : "text-[#2b2b2b]")}>
              <td className="border-b border-dotted border-[#555] p-0 pl-[8px]">{p.label}</td>
              <td className={clsx("border-r border-b border-l border-dotted border-[#555] p-0", p.kind === "button" ? "pl-px" : "pl-[2px]")}>
                <PropertyValue item={p} />
              </td>
            </tr>
          ))}
        </tbody>
      ))}
    </table>
  );
}

function PropertiesPalette() {
  return (
    <aside className="absolute top-[103px] bottom-[66px] left-2 flex w-[455px] flex-col border-r-2 border-b-2 border-[#777] bg-[#f7f7f7] p-[3px] pl-1 shadow-[-1px_-1px_0_#d9d9d9]">
      <header className="flex h-[25px] shrink-0 items-center justify-between bg-[#bfccd9] pr-[3px] pl-[2px]">
        <h2 className="text-[11px] font-bold text-black">Proprietà</h2>
        <button aria-label="close"><CloseMark /></button>
      </header>
      <div className="flex flex-1 flex-col border-t border-l-2 border-[#6e6e6e] bg-[#f0f0f0] pr-px">
        <div className="flex h-[72px] shrink-0 items-center border border-[#dedede] bg-linear-to-b from-[#fdfdfd] to-[#ececec] pr-[2px] pl-[2px]">
          <svg width="67" height="66" viewBox="0 0 65 65" className="border border-[#dcdcdc] bg-[#fbfbfb]" aria-hidden="true">
            <defs>
              <linearGradient id="elbow" x1="0" y1="0" x2="1" y2="1">
                <stop offset="0" stopColor="#7476f2" />
                <stop offset="0.7" stopColor="#7b7cf8" />
                <stop offset="1" stopColor="#5b5cb8" />
              </linearGradient>
            </defs>
            <path d="M1 25Q5 16 11 16q5 0 7 3 14 6 29 0 3-3 7-3 7 2 10 12v8q-3 5-10 7-5 1-8 3-14 3-27 0-7-3-12-4-6-3-7-6z" fill="url(#elbow)" />
          </svg>
          <div className="ml-[3px] flex-1 text-[11px] leading-4 text-[#a3a3a3]">
            <p>ECOLINE_Gomito - DN 450 - 90°</p>
            <p>DN450 90°</p>
          </div>
          <Caret className="text-[#888]" />
        </div>
        <div className="flex h-6 shrink-0 items-center">
          <div className="flex h-[22px] w-[336px] items-center border border-[#bcbcbc] bg-[#cacaca]">
            <select disabled aria-label="Filtro" className="flex-1 appearance-none pl-[2px] text-[11px] text-[#7b7b7b]">
              <option>Raccordi tubazione (1)</option>
            </select>
            <ChevronDown size={13} strokeWidth={1.5} className="mr-px text-[#a0a0a0]" />
          </div>
          <button disabled className="ml-[6px] flex items-center gap-[5px] text-[11px] text-[#9d9d9d]">
            <Icon name="typeProps" size={16} />
            Modifica tipo
          </button>
        </div>
        <PropertyTable />
        <div className="mt-auto flex items-center justify-between pr-[2px] pb-[3px] pl-[2px] text-[11px]">
          <a href="#guida" className="text-[#1a63c2] underline">Guida alle proprietà</a>
          <button disabled className="h-[21px] w-[73px] border border-[#bfbfbf] bg-[#cccccc] text-[#8a8a8a]">Applica</button>
        </div>
      </div>
    </aside>
  );
}

/* ---------- error dialog ---------- */

function DialogButton({ children, width, state = "normal" }: { children: ReactNode; width: string; state?: "normal" | "off" | "default" }) {
  return (
    <button
      disabled={state === "off"}
      className={clsx(
        "h-[22px]",
        width,
        state === "normal" && "border border-[#adadad] bg-[#e1e1e1] text-black",
        state === "off" && "border border-[#bfbfbf] bg-[#cccccc] text-[#8a8a8a]",
        state === "default" && "border-2 border-[#0f74c8] bg-[#e1e1e1] text-black",
      )}
    >
      {children}
    </button>
  );
}

function ErrorDialog() {
  return (
    <div
      role="dialog"
      aria-labelledby="dialog-title"
      className="absolute right-[4px] bottom-[5px] flex h-[204px] w-[454px] flex-col border border-[#999] bg-[#f0f0f0] font-['Liberation_Sans',sans-serif] text-[11px] shadow-[0_2px_10px_rgba(0,0,0,0.35)]"
    >
      <h2 id="dialog-title" className="h-[30px] bg-white pl-2 font-['Noto_Sans',sans-serif] text-[11px] leading-[30px] text-[#999]">
        Autodesk Revit 2016
      </h2>
      <fieldset className="mx-[11px] h-[117px] border border-[#dcdcdc] px-2 pb-[8px]">
        <legend className="-ml-[3px] px-[2px] leading-[14px] text-black">Errore - impossibile ignorare</legend>
        <div className="mt-[2px] flex h-[63px] border border-[#777] bg-white p-px">
          <p className="flex-1 pt-[2px] pl-[3px] leading-[13px] text-black">
            La modifica della famiglia di un raccordo MEP potrebbe provocare risultati imprevisti.
          </p>
          <div className="flex w-4 flex-col items-center justify-between bg-[#f0f0f0] py-[2px] text-[#b5b5b5]">
            <ChevronUp size={12} strokeWidth={3} />
            <ChevronDown size={12} strokeWidth={3} />
          </div>
        </div>
        <div className="mt-[7px] flex justify-end gap-2 pr-px">
          <DialogButton width="w-[79px]">Mostra</DialogButton>
          <DialogButton width="w-[73px]" state="off">Altre info</DialogButton>
          <DialogButton width="w-[91px]">Espandi &gt;&gt;</DialogButton>
        </div>
      </fieldset>
      <div className="mt-auto flex justify-end gap-2 pr-3 pb-[11px]">
        <DialogButton width="w-[88px]" state="off">OK</DialogButton>
        <DialogButton width="w-[88px]" state="default">Annulla</DialogButton>
      </div>
    </div>
  );
}

/* ---------- status bar ---------- */

function StatusSelect({ label, value, width }: { label: string; value: string; width: string }) {
  return (
    <div className={clsx("flex h-[22px] items-center border-2 border-[#cfcfcf] bg-white text-[#8a8a8a]", width)}>
      <select disabled aria-label={label} className="h-full flex-1 appearance-none border-r border-[#eee] pl-[2px] text-[11px] text-[#6f6f6f]">
        <option>{value}</option>
      </select>
      <ChevronDown size={13} strokeWidth={1.5} className="mx-[2px]" />
    </div>
  );
}

function StatusBar() {
  const tool = "flex h-[22px] items-center justify-center bg-[#d5d5d5] text-[#999]";
  return (
    <footer className="mt-[2px] flex h-[25px] shrink-0 items-end border-t border-[#7c7c7c] bg-linear-to-b from-[#dedede] to-[#bdbdbd]">
      <p className="w-[920px] shrink-0 truncate pl-[2px] text-[11px] leading-[24px] text-black">
        Fare clic per selezionare, premere TAB per alternare, CTRL per aggiungere e MAIUSC per deselezionare.
      </p>
      <button disabled aria-label="worksets" className={clsx(tool, "w-[26px]")}><Icon name="worksets" fill="#bbb" /></button>
      <StatusSelect label="Workset attivo" value="" width="w-[209px]" />
      <button disabled className={clsx(tool, "ml-[2px] w-[52px] gap-[4px] pr-[14px] text-[11px]")}>
        <Icon name="editable" />
        <span className="font-bold text-black">:0</span>
      </button>
      <button disabled aria-label="design options" className={clsx(tool, "ml-[2px] w-[24px]")}><Icon name="design" /></button>
      <button disabled aria-label="add to set" className={clsx(tool, "mx-[2px] w-[24px]")}><Icon name="addSet" /></button>
      <StatusSelect label="Opzione di progettazione" value="Modello principale" width="w-[158px]" />
    </footer>
  );
}

export default function App() {
  return (
    <div className="relative flex h-screen flex-col overflow-hidden bg-white font-['Noto_Sans',sans-serif] text-[#222]">
      <div className="flex h-[44px] shrink-0 bg-[#9f9f9f]">
        <button aria-label="application menu" className="flex h-[41px] w-[41px] shrink-0 items-center justify-between border border-black bg-linear-to-b from-[#6e6e6e] to-[#c9c9c9] pr-[2px] pb-[6px] pl-[4px] text-[#222]">
          <svg width="23" height="28" viewBox="0 0 24 30" aria-hidden="true">
            <path d="M8 3l6-2 3 5v8l-4 5 10 9-6 1-9-9-2 8-5-1z" fill="#1a3f8f" />
            <path d="M8 3l3 1v14L5 28l-4-1z" fill="#13295f" />
            <path d="M11 4l5 1v8l-5 5z" fill="#1b51b8" />
          </svg>
          <Caret />
        </button>
        <div className="flex min-w-0 flex-1 flex-col">
          <TitleBar />
          <Tabs />
        </div>
      </div>
      <div className="shrink-0">
        <Ribbon />
        <OptionsBar />
      </div>
      <div className="flex min-h-0 flex-1 bg-[#f0f0f0]">
        <DrawingArea />
        <SystemBrowser />
      </div>
      <StatusBar />
      <PropertiesPalette />
      <ErrorDialog />
    </div>
  );
}
